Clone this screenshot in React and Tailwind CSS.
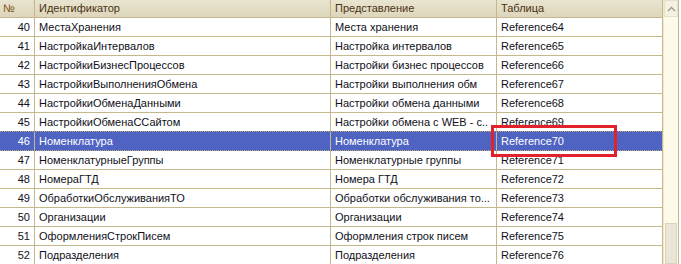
const ROWS = [
  ["40", "МестаХранения", "Места хранения", "Reference64"],
  ["41", "НастройкаИнтервалов", "Настройка интервалов", "Reference65"],
  ["42", "НастройкиБизнесПроцессов", "Настройки бизнес процессов", "Reference66"],
  ["43", "НастройкиВыполненияОбмена", "Настройки выполнения обм", "Reference67"],
  ["44", "НастройкиОбменаДанными", "Настройки обмена данными", "Reference68"],
  ["45", "НастройкиОбменаССайтом", "Настройки обмена с WEB - с..", "Reference69"],
  ["46", "Номенклатура", "Номенклатура", "Reference70"],
  ["47", "НоменклатурныеГруппы", "Номенклатурные группы", "Reference71"],
  ["48", "НомераГТД", "Номера ГТД", "Reference72"],
  ["49", "ОбработкиОбслуживанияТО", "Обработки обслуживания то...", "Reference73"],
  ["50", "Организации", "Организации", "Reference74"],
  ["51", "ОформленияСтрокПисем", "Оформления строк писем", "Reference75"],
  ["52", "Подразделения", "Подразделения", "Reference76"],
];

const COLS = "grid grid-cols-[35px_296px_166px_166px]";

function Row({ cells, selected }) {
  const [n, id, name, table] = cells;
  return (
    <div
      className={`${COLS} h-[19px] border-b ${
        selected
          ? "bg-[#4f63c3] text-white border-dotted border-[#b9a86a] border-t -mt-px h-[20px]"
          : "bg-white text-[#101020] border-[#c4b88c]"
      }`}
    >
      <div className={`border-r ${selected ? "border-[#c4b88c]" : "border-[#c4b88c]"} pr-[4px] text-right leading-[18px]`}>{n}</div>
      <div className="border-r border-[#c4b88c] pl-[4px] leading-[18px] overflow-hidden whitespace-nowrap">{id}</div>
      <div className="border-r border-[#c4b88c] pl-[4px] leading-[18px] overflow-hidden whitespace-nowrap">{name}</div>
      <div className="border-r border-[#c4b88c] pl-[4px] leading-[18px] overflow-hidden whitespace-nowrap">{table}</div>
    </div>
  );
}

export default function App() {
  return (
    <div className="w-[681px] h-[264px] overflow-hidden bg-white flex font-['Liberation_Sans',Arial,sans-serif] text-[11px]">
      <div className="relative w-[663px] flex flex-col">
        {/* header */}
        <div className={`${COLS} h-[18px] shrink-0 border-b border-[#c4b88c] bg-gradient-to-b from-[#e9e4cf] to-[#ddd6bc] text-[#4a3212]`}>
          <div className="border-r border-[#c4b88c] pl-[3px] leading-[17px] text-[#7a5210]">№</div>
          <div className="border-r border-[#c4b88c] pl-[4px] leading-[17px]">Идентификатор</div>
          <div className="border-r border-[#c4b88c] pl-[4px] leading-[17px]">Представление</div>
          <div className="border-r border-[#c4b88c] pl-[4px] leading-[17px]">Таблица</div>
        </div>
        {ROWS.map((r) => (
          <Row key={r[0]} cells={r} selected={r[0] === "46"} />
        ))}
        {/* highlight annotation */}
        <div className="absolute left-[491px] top-[125px] w-[126px] h-[32px] border-[3px] border-[#e3212b]" />
      </div>

      {/* scrollbar */}
      <div className="w-[15px] flex flex-col bg-[#fdfaea] border-l border-[#efe9d2]">
        <div className="h-[17px] flex items-center justify-center bg-[#f4f1e3] border border-[#e6e0c8]">
          <svg width="9" height="6" viewBox="0 0 9 6" fill="none">
            <path d="M1 5L4.5 1.5L8 5" stroke="#9a9a8a" strokeWidth="1.3" />
          </svg>
        </div>
        <div className="flex-1" />
        <div className="h-[41px] bg-[#ebe5d7] border border-[#dcd3b9] mx-[1px]" />
      </div>
      <div className="w-px bg-[#c4b88c]" />
      <div className="flex-1 bg-white" />
    </div>
  );
}
